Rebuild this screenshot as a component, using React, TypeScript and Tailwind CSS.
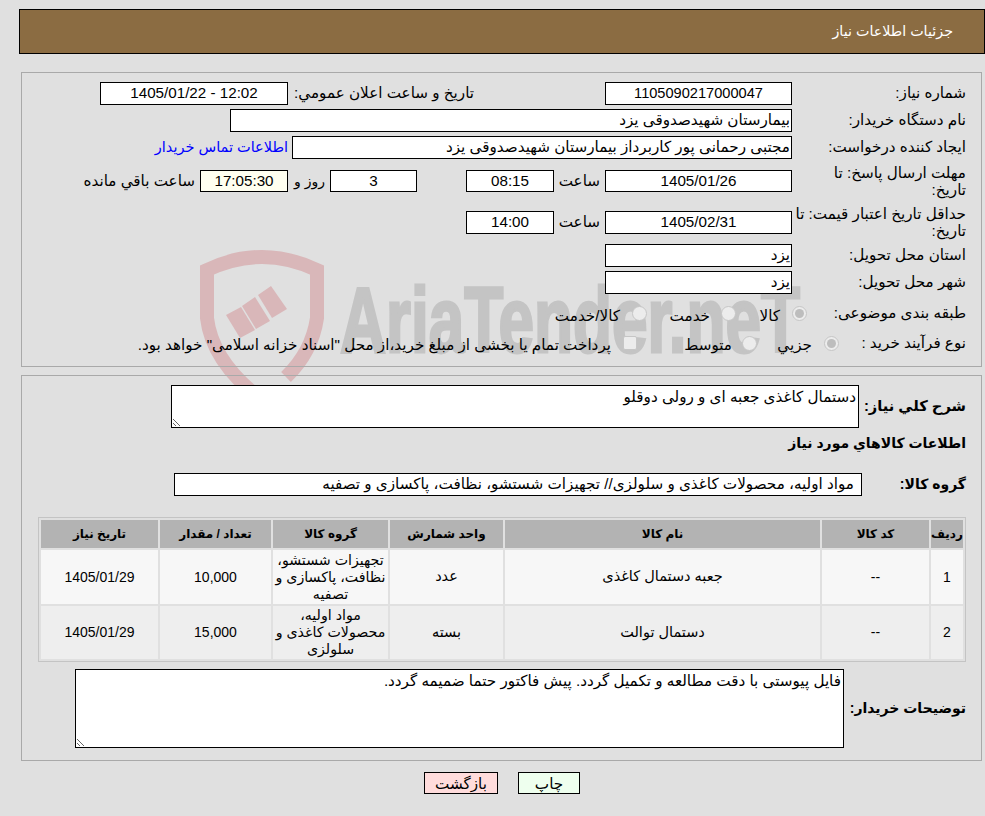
import type { ReactNode } from 'react';

const ROWS = [
  {
    index: '1',
    code: '--',
    name: 'جعبه دستمال کاغذی',
    unit: 'عدد',
    group: 'تجهیزات شستشو، نظافت، پاکسازی و تصفیه',
    qty: '10,000',
    date: '1405/01/29',
    bg: 'bg-[#f7f7f7]',
    height: 'h-[54px]',
  },
  {
    index: '2',
    code: '--',
    name: 'دستمال توالت',
    unit: 'بسته',
    group: 'مواد اولیه، محصولات کاغذی و سلولزی',
    qty: '15,000',
    date: '1405/01/29',
    bg: 'bg-[#eeeeee]',
    height: 'h-[53px]',
  },
];

function Box({
  className = '',
  short = false,
  tinted = false,
  children,
}: {
  className?: string;
  short?: boolean;
  tinted?: boolean;
  children?: ReactNode;
}) {
  return (
    <div
      className={`flex shrink-0 items-center border border-black ${short ? 'h-[22px]' : 'h-[23px]'} ${
        tinted ? 'bg-[#fffff0]' : 'bg-white'
      } ${className}`}
    >
      {children}
    </div>
  );
}

function Radio({ checked = false }: { checked?: boolean }) {
  return (
    <span className="flex h-[15px] w-[15px] shrink-0 items-center justify-center rounded-full border border-[#c6c6c6] bg-[#ececec]">
      {checked && <span className="h-[9px] w-[9px] rounded-full bg-[#bdbdbd]" />}
    </span>
  );
}

function Watermark() {
  return (
    <svg
      aria-hidden="true"
      dir="ltr"
      className="pointer-events-none absolute left-[190px] top-[240px] h-[200px] w-[640px]"
      viewBox="0 0 640 200"
    >
      <path
        d="M96 137 Q122 112 127 78 L127 30 Q72 4 17 30 L17 78 Q22 122 72 160"
        fill="none"
        stroke="#d9b7b9"
        strokeWidth="14"
      />
      <g fill="#d9b7b9">
        <polygon points="36,75 51,67 65,90 50,98" />
        <polygon points="52,66 65,57 80,81 66,89" />
        <polygon points="68,55 81,46 97,69 82,78" />
      </g>
      <text
        x="150"
        y="112"
        direction="ltr"
        textAnchor="start"
        fill="#c4c4c4"
        stroke="#c4c4c4"
        strokeWidth="3"
        fontFamily="'Liberation Sans', sans-serif"
        fontSize="92"
        fontWeight="700"
        textLength="460"
        lengthAdjust="spacingAndGlyphs"
      >
        AriaTender.neT
      </text>
    </svg>
  );
}

export default function App() {
  return (
    <div
      dir="rtl"
      className="relative h-[816px] overflow-hidden bg-[#e0e0e0] font-['Liberation_Sans','DejaVu_Sans',sans-serif] text-[15.2px] text-black"
    >
      <Watermark />

      <div className="relative pt-[9px]">
        <header className="ml-[19px] flex h-[45px] items-center border border-black bg-[#8b6c42] pr-[31px] text-[14.3px] text-white">
          جزئیات اطلاعات نیاز
        </header>

        <section className="ml-[21px] mr-[3px] mt-[18px] h-[295px] border border-[#a9a9a9] pr-[15px] pt-[9px]">
          <div className="flex h-[23px] items-center">
            <div className="w-[174px] shrink-0">شماره نیاز:</div>
            <Box className="w-[187px] justify-center text-[14.6px]">1105090217000047</Box>
            <div className="ms-[131px] w-[186px] shrink-0">تاریخ و ساعت اعلان عمومي:</div>
            <Box className="w-[188px] justify-center">
              <span dir="ltr">1405/01/22 - 12:02</span>
            </Box>
          </div>

          <div className="mt-[4px] flex h-[23px] items-center">
            <div className="w-[174px] shrink-0">نام دستگاه خریدار:</div>
            <Box className="w-[562px] pr-[1px]">بیمارستان شهیدصدوقی یزد</Box>
          </div>

          <div className="mt-[4px] flex h-[23px] items-center">
            <div className="w-[174px] shrink-0">ایجاد کننده درخواست:</div>
            <Box className="w-[500px] pr-[1px]">مجتبی رحمانی پور کاربرداز بیمارستان شهیدصدوقی یزد</Box>
            <a href="#" className="ms-[4px] text-[14.5px] text-[#0000ff]">
              اطلاعات تماس خریدار
            </a>
          </div>

          <div className="mt-[5px] flex h-[34px] items-center">
            <div className="w-[174px] shrink-0 leading-[17px]">
              مهلت ارسال پاسخ: تا
              <br />
              تاریخ:
            </div>
            <Box short className="w-[187px] justify-center">
              1405/01/26
            </Box>
            <div className="w-[51px] shrink-0 pr-[5px]">ساعت</div>
            <Box short className="w-[88px] justify-center">
              08:15
            </Box>
            <Box short className="ms-[49px] w-[87px] justify-center">
              3
            </Box>
            <div className="w-[42px] shrink-0 pr-[5px] text-[14px]">روز و</div>
            <Box short tinted className="w-[88px] justify-center">
              17:05:30
            </Box>
            <div className="whitespace-nowrap pr-[5px]">ساعت باقي مانده</div>
          </div>

          <div className="mt-[7px] flex h-[34px] items-center">
            <div className="w-[174px] shrink-0 leading-[17px]">
              حداقل تاریخ اعتبار قیمت: تا
              <br />
              تاریخ:
            </div>
            <Box className="w-[187px] justify-center">1405/02/31</Box>
            <div className="w-[51px] shrink-0 pr-[5px]">ساعت</div>
            <Box className="w-[88px] justify-center">14:00</Box>
          </div>

          <div className="mt-[5px] flex h-[23px] items-center">
            <div className="w-[174px] shrink-0">استان محل تحویل:</div>
            <Box className="w-[187px] pr-[1px]">یزد</Box>
          </div>

          <div className="mt-[4px] flex h-[23px] items-center">
            <div className="w-[174px] shrink-0">شهر محل تحویل:</div>
            <Box className="w-[187px] pr-[1px]">یزد</Box>
          </div>

          <div className="mt-[6px] flex h-[26px] items-center">
            <div className="w-[159px] shrink-0">طبقه بندی موضوعی:</div>
            <div className="flex w-[71px] shrink-0 items-center">
              <Radio checked />
              <span className="mr-[12px] mt-[6px]">کالا</span>
            </div>
            <div className="flex w-[89px] shrink-0 items-center">
              <Radio />
              <span className="mr-[11px] mt-[6px]">خدمت</span>
            </div>
            <div className="flex items-center">
              <Radio />
              <span className="mr-[12px] mt-[6px]">کالا/خدمت</span>
            </div>
          </div>

          <div className="mt-[4px] flex h-[26px] items-center">
            <div className="w-[127px] shrink-0">نوع فرآیند خرید :</div>
            <div className="flex w-[82px] shrink-0 items-center">
              <Radio checked />
              <span className="mr-[12px] mt-[4px]">جزيي</span>
            </div>
            <div className="flex w-[120px] shrink-0 items-center">
              <Radio />
              <span className="mr-[10px] mt-[4px]">متوسط</span>
            </div>
            <div className="flex items-center">
              <span className="h-[14px] w-[14px] shrink-0 rounded-[2px] border border-[#c6c6c6] bg-[#ececec]" />
              <span className="mr-[12px] mt-[4px] whitespace-nowrap">
                پرداخت تمام یا بخشی از مبلغ خرید،از محل "اسناد خزانه اسلامی" خواهد بود.
              </span>
            </div>
          </div>
        </section>

        <section className="ml-[21px] mr-[3px] mt-[8px] h-[386px] border border-[#a9a9a9] pr-[15px] pt-[9px]">
          <div className="flex h-[43px] items-center font-bold">
            <div className="w-[107px] shrink-0 text-[14.7px]">شرح کلي نیاز:</div>
            <textarea
              readOnly
              defaultValue="دستمال کاغذی جعبه ای و رولی دوقلو"
              className="h-[43px] w-[688px] shrink-0 border border-black bg-white px-[2px] font-normal"
            />
          </div>

          <h2 className="mt-[5px] h-[20px] text-[14px] font-bold leading-[20px]">اطلاعات کالاهاي مورد نیاز</h2>

          <div className="mt-[20px] flex h-[23px] items-center font-bold">
            <div className="w-[104px] shrink-0 text-[14px]">گروه کالا:</div>
            <Box className="w-[688px] pr-[7px] font-normal">
              مواد اولیه، محصولات کاغذی و سلولزی// تجهیزات شستشو، نظافت، پاکسازی و تصفیه
            </Box>
          </div>

          <table className="mt-[21px] w-[928px] table-fixed border-separate border-spacing-[2px] border border-[#c4c4c4] text-center text-[14.5px]">
            <colgroup>
              <col className="w-[32px]" />
              <col className="w-[107px]" />
              <col className="w-[315px]" />
              <col className="w-[113px]" />
              <col className="w-[115px]" />
              <col className="w-[111px]" />
              <col className="w-[117px]" />
            </colgroup>
            <thead>
              <tr className="h-[28px] bg-[#b3b3b3] text-[12px] font-bold">
                <th className="whitespace-nowrap">ردیف</th>
                <th>کد کالا</th>
                <th>نام کالا</th>
                <th>واحد شمارش</th>
                <th>گروه کالا</th>
                <th>تعداد / مقدار</th>
                <th>تاریخ نیاز</th>
              </tr>
            </thead>
            <tbody>
              {ROWS.map((row) => (
                <tr key={row.index} className={`${row.bg} ${row.height}`}>
                  <td className="text-[14px]">{row.index}</td>
                  <td className="text-[14px]">{row.code}</td>
                  <td>{row.name}</td>
                  <td>{row.unit}</td>
                  <td className="text-[14.2px] leading-[17px]">{row.group}</td>
                  <td className="text-[14px]">{row.qty}</td>
                  <td className="text-[14px]">{row.date}</td>
                </tr>
              ))}
            </tbody>
          </table>

          <div className="mt-[7px] flex h-[79px] items-center font-bold">
            <div className="w-[122px] shrink-0 text-[14px]">توضیحات خریدار:</div>
            <textarea
              readOnly
              defaultValue="فایل پیوستی با دقت مطالعه و تکمیل گردد. پیش فاکتور حتما ضمیمه گردد."
              className="h-[79px] w-[769px] shrink-0 border border-black bg-white px-[2px] font-normal"
            />
          </div>
        </section>

        <div className="mt-[11px] flex gap-[20px] pr-[405px]">
          <button className="h-[22px] w-[62px] border border-black bg-[#eeffee]">چاپ</button>
          <button className="h-[22px] w-[74px] border border-black bg-[#ffdcdc]">بازگشت</button>
        </div>
      </div>
    </div>
  );
}
